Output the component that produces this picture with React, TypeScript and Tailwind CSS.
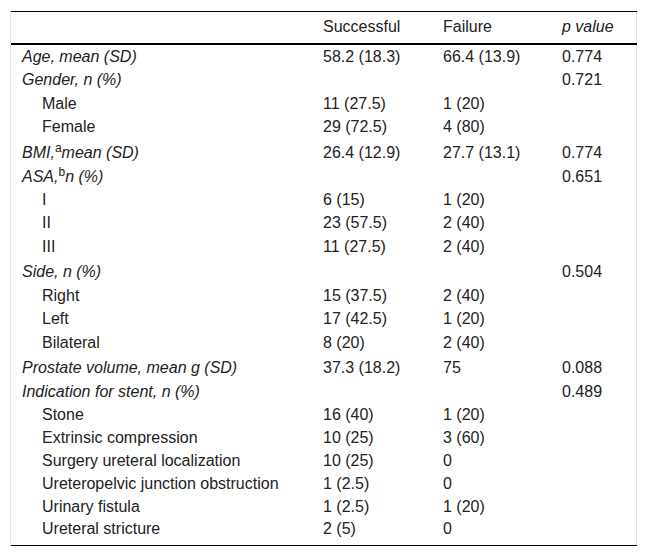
type Row = {
  label: React.ReactNode;
  group?: boolean;
  ok?: string;
  fail?: string;
  p?: string;
  h: string;
};

const rows: Row[] = [
  { label: "Age, mean (SD)", group: true, ok: "58.2 (18.3)", fail: "66.4 (13.9)", p: "0.774", h: "h-[24px]" },
  { label: "Gender, n (%)", group: true, p: "0.721", h: "h-[24px]" },
  { label: "Male", ok: "11 (27.5)", fail: "1 (20)", h: "h-[23px]" },
  { label: "Female", ok: "29 (72.5)", fail: "4 (80)", h: "h-[24px]" },
  {
    label: (
      <>
        BMI,<sup className="not-italic">a</sup>mean (SD)
      </>
    ),
    group: true,
    ok: "26.4 (12.9)",
    fail: "27.7 (13.1)",
    p: "0.774",
    h: "h-[26px] [&>td]:pt-[2px]",
  },
  {
    label: (
      <>
        ASA,<sup className="not-italic">b</sup>n (%)
      </>
    ),
    group: true,
    p: "0.651",
    h: "h-[23px]",
  },
  { label: "I", ok: "6 (15)", fail: "1 (20)", h: "h-[23px]" },
  { label: "II", ok: "23 (57.5)", fail: "2 (40)", h: "h-[24px]" },
  { label: "III", ok: "11 (27.5)", fail: "2 (40)", h: "h-[24px]" },
  { label: "Side, n (%)", group: true, p: "0.504", h: "h-[25px]" },
  { label: "Right", ok: "15 (37.5)", fail: "2 (40)", h: "h-[23px]" },
  { label: "Left", ok: "17 (42.5)", fail: "1 (20)", h: "h-[23px]" },
  { label: "Bilateral", ok: "8 (20)", fail: "2 (40)", h: "h-[25px]" },
  { label: "Prostate volume, mean g (SD)", group: true, ok: "37.3 (18.2)", fail: "75", p: "0.088", h: "h-[25px]" },
  { label: "Indication for stent, n (%)", group: true, p: "0.489", h: "h-[23px]" },
  { label: "Stone", ok: "16 (40)", fail: "1 (20)", h: "h-[23px]" },
  { label: "Extrinsic compression", ok: "10 (25)", fail: "3 (60)", h: "h-[23px]" },
  { label: "Surgery ureteral localization", ok: "10 (25)", fail: "0", h: "h-[23px]" },
  { label: "Ureteropelvic junction obstruction", ok: "1 (2.5)", fail: "0", h: "h-[23px]" },
  { label: "Urinary fistula", ok: "1 (2.5)", fail: "1 (20)", h: "h-[23px]" },
  // last row keeps some room above the closing rule
  { label: "Ureteral stricture", ok: "2 (5)", fail: "0", h: "h-[28px] [&>td]:pb-[5px]" },
];

const App = () => {
  return (
    <div className="bg-white w-[647px] h-[557px] pt-[11px] pl-[10px] font-['Liberation_Sans',Arial,sans-serif] text-[16px] text-[#222]">
      <div className="w-[627px] border-x border-[#e4e4e4]">
        <table className="w-[626px] border-collapse table-fixed">
          <colgroup>
            <col className="w-[301px]" />
            <col className="w-[120px]" />
            <col className="w-[119px]" />
            <col className="w-[86px]" />
          </colgroup>
          <thead>
            <tr className="border-t border-b-2 border-black">
              <th className="h-[32px] pl-[11px] font-normal text-left"></th>
              <th className="pl-[11px] font-normal text-left">Successful</th>
              <th className="pl-[11px] font-normal text-left">Failure</th>
              <th className="pl-[11px] font-normal text-left italic">p value</th>
            </tr>
          </thead>
          <tbody className="border-b border-black">
            {rows.map((r, i) => (
              <tr key={i} className={`leading-[19px] ${r.h}`}>
                <td className={r.group ? "p-0 pl-[11px] italic" : "p-0 pl-[31px]"}>{r.label}</td>
                <td className="p-0 pl-[11px]">{r.ok}</td>
                <td className="p-0 pl-[11px]">{r.fail}</td>
                <td className="p-0 pl-[11px]">{r.p}</td>
              </tr>
            ))}
          </tbody>
        </table>
      </div>
    </div>
  );
};

export default App;
